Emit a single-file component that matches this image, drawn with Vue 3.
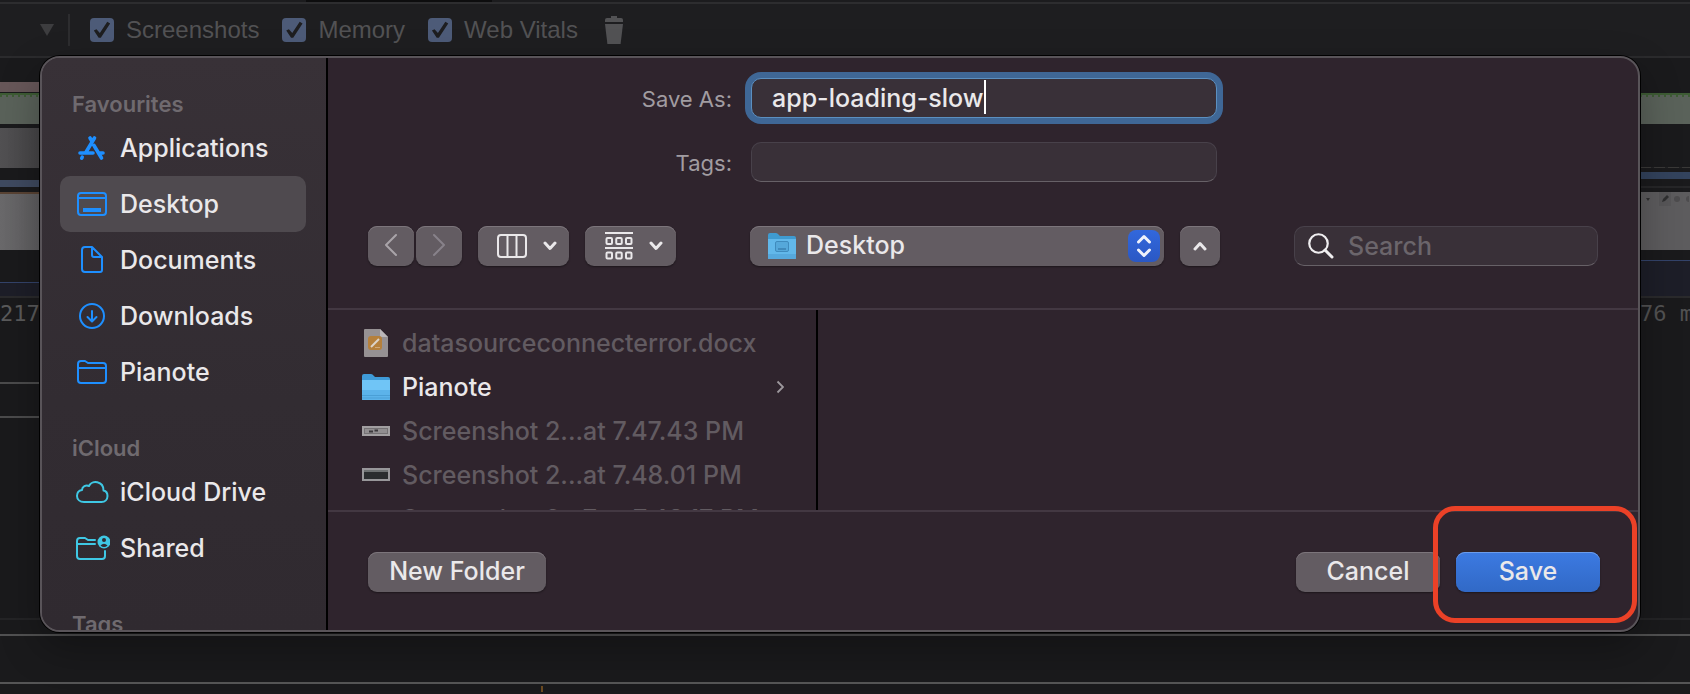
<script setup>
import { ref } from 'vue'

const captureOptions = ref([
  { id: 'opt-screenshots', label: 'Screenshots', on: true },
  { id: 'opt-memory', label: 'Memory', on: true },
  { id: 'opt-vitals', label: 'Web Vitals', on: true },
])

const fileName = ref('app-loading-slow')
const tags = ref('')
const query = ref('')
const folder = ref('Desktop')

const favourites = [
  { name: 'Applications', icon: 'apps' },
  { name: 'Desktop', icon: 'desktop', active: true },
  { name: 'Documents', icon: 'doc' },
  { name: 'Downloads', icon: 'down' },
  { name: 'Pianote', icon: 'folder' },
]
const cloud = [
  { name: 'iCloud Drive', icon: 'cloud' },
  { name: 'Shared', icon: 'shared' },
]
const sections = [
  { title: 'Favourites', items: favourites, tone: 'tone-blue' },
  { title: 'iCloud', items: cloud, tone: 'tone-cyan' },
  { title: 'Tags', items: [], tone: 'tone-blue' },
]

const files = [
  { name: 'datasourceconnecterror.docx', icon: 'docx' },
  { name: 'Pianote', icon: 'folder', open: true },
  { name: 'Screenshot 2...at 7.47.43 PM', icon: 'shotLight' },
  { name: 'Screenshot 2...at 7.48.01 PM', icon: 'shotDark' },
  { name: 'Screenshot 2...7 at 7.48.17 PM', icon: 'none' },
]
</script>

<template>
  <div class="screen">
    <div class="backdrop">
      <div class="tabstrip"><span class="tab-mark"></span></div>
      <header class="devbar">
        <svg class="tri" width="14" height="12" viewBox="0 0 14 12"><path d="M0 0H14L7 12Z" fill="#3d3d3f" /></svg>
        <span class="bar-sep"></span>
        <label v-for="o in captureOptions" :key="o.id" class="opt" :for="o.id">
          <input :id="o.id" v-model="o.on" type="checkbox" />
          <span>{{ o.label }}</span>
        </label>
        <svg class="trash" width="18" height="28" viewBox="0 0 18 28" fill="#525254">
          <path d="M6 0H12V2H16Q18 2 18 4V6H0V4Q0 2 2 2H6Z" />
          <path d="M0 8H18L15.600 28H2.400Z" />
        </svg>
      </header>
      <div class="tracks">
        <div class="gutter left">
          <i class="pink"></i>
          <i class="green"></i>
          <i class="grey"></i>
          <i class="blue"></i>
          <i class="shot"></i>
          <i class="navy"></i>
          <span class="ms">217</span>
          <i class="rule first"></i>
          <i class="rule"></i>
        </div>
        <div class="gutter right">
          <i class="green"></i>
          <i class="dash"></i>
          <i class="blue"></i>
          <i class="hair"></i>
          <i class="shot">
            <svg width="49" height="14" viewBox="0 0 49 14">
              <rect x="19" width="12" height="14" fill="#575658" />
              <path d="M6 6H10L8 9Z" fill="#2f2f30" />
              <path d="M22 10L23 7L27 3L29 5L25 9Z" fill="#2f2f30" />
              <circle cx="37" cy="7" r="3" fill="#4d4c4e" />
              <circle cx="49" cy="7" r="3" fill="#4d4c4e" />
            </svg>
          </i>
          <i class="navy"></i>
          <span class="ms">76 ms</span>
        </div>
      </div>
      <div class="panel-a"></div>
      <div class="panel-b"></div>
      <div class="panel-c"><span class="tick"></span></div>
    </div>

    <section class="dialog" role="dialog" aria-label="Save">
      <nav class="sidebar">
        <div v-for="s in sections" :key="s.title" class="section" :class="s.tone">
          <h2>{{ s.title }}</h2>
          <a v-for="i in s.items" :key="i.name" href="#" class="place" :class="{ active: i.active }">
            <svg width="36" height="32" viewBox="0 0 36 32" fill="none" stroke="currentColor" stroke-width="2" stroke-linecap="round" stroke-linejoin="round">
              <g v-if="i.icon === 'apps'" stroke-width="3.600">
                <path d="M16 6L17.500 8.500M20.500 6L11.800 20.500M6 21H19M8.200 25.200L7.700 26.200M20 13.500L27.500 26M25.500 21H29" />
              </g>
              <g v-else-if="i.icon === 'desktop'">
                <rect x="4" y="5" width="28" height="22" rx="3" />
                <path d="M4 10H32" />
                <path d="M9 22H27" stroke-width="4" stroke-linecap="butt" />
              </g>
              <g v-else-if="i.icon === 'doc'">
                <path d="M11 3H18L28 13V26Q28 28 26 28H11Q8 28 8 25V6Q8 3 11 3ZM18 3V11Q18 13 20 13H28" />
              </g>
              <g v-else-if="i.icon === 'down'">
                <circle cx="18" cy="16" r="12" />
                <path d="M18 11V21M13.500 17L18 21.500L22.500 17" />
              </g>
              <g v-else-if="i.icon === 'folder'">
                <path d="M4 8Q4 5 7 5H11L14 7H29Q32 7 32 10V24Q32 27 29 27H7Q4 27 4 24ZM4 12H32" />
              </g>
              <g v-else-if="i.icon === 'cloud'">
                <path d="M10 26C6 26 3 23.500 3 20C3 17 5 14.500 8 14C8 10.500 12 8.500 15 10C18 3.500 29.500 5 29.500 14.500C32 15 33.500 17.500 33.500 20C33.500 23.500 31 26 27.500 26Z" />
              </g>
              <g v-else>
                <path d="M21 8H14L11 6H6Q3 6 3 9V24Q3 27 6 27H28Q31 27 31 24V19M3 12H21" />
                <circle cx="30" cy="10" r="6.500" fill="currentColor" stroke="none" />
                <circle cx="30" cy="8" r="2" fill="#302b31" stroke="none" />
                <path d="M26.500 13.500Q30 10 33.500 13.500Q30 16.500 26.500 13.500Z" fill="#302b31" stroke="none" />
              </g>
            </svg>
            <span>{{ i.name }}</span>
          </a>
        </div>
      </nav>

      <div class="main">
        <form class="fields" @submit.prevent>
          <label for="save-as">Save As:</label>
          <div class="field">
            <input id="save-as" v-model="fileName" class="focused" type="text" />
            <span class="caret"></span>
          </div>
          <label for="tags">Tags:</label>
          <div class="field"><input id="tags" v-model="tags" type="text" /></div>
        </form>

        <div class="toolbar">
          <div class="group">
            <div class="pair">
              <button type="button" class="btn nav" aria-label="Back">
                <svg width="14" height="24" viewBox="0 0 14 24"><path d="M12 2L2 12L12 22" fill="none" stroke="#a9a4a9" stroke-width="2" stroke-linecap="round" stroke-linejoin="round" /></svg>
              </button>
              <button type="button" class="btn nav" aria-label="Forward">
                <svg width="14" height="24" viewBox="0 0 14 24"><path d="M2 2L12 12L2 22" fill="none" stroke="#88828a" stroke-width="2" stroke-linecap="round" stroke-linejoin="round" /></svg>
              </button>
            </div>
            <button type="button" class="btn view" aria-label="Column view">
              <svg width="30" height="28" viewBox="0 0 30 28" fill="none" stroke="#eae8ea" stroke-width="2"><rect x="1" y="3" width="28" height="22" rx="3" /><path d="M10.500 3V25M19.500 3V25" /></svg>
              <svg width="14" height="10" viewBox="0 0 14 10"><path d="M2 2L7 7.500L12 2" fill="none" stroke="#eae8ea" stroke-width="3" stroke-linecap="round" stroke-linejoin="round" /></svg>
            </button>
            <button type="button" class="btn view" aria-label="Group items">
              <svg width="28" height="28" viewBox="0 0 28 28" fill="none" stroke="#eae8ea" stroke-width="2">
                <path d="M0 1H28M0 16H28" />
                <rect x="1.500" y="6" width="5.500" height="6" rx="1" /><rect x="11.250" y="6" width="5.500" height="6" rx="1" /><rect x="21" y="6" width="5.500" height="6" rx="1" />
                <rect x="1.500" y="20.500" width="5.500" height="6" rx="1" /><rect x="11.250" y="20.500" width="5.500" height="6" rx="1" /><rect x="21" y="20.500" width="5.500" height="6" rx="1" />
              </svg>
              <svg width="14" height="10" viewBox="0 0 14 10"><path d="M2 2L7 7.500L12 2" fill="none" stroke="#eae8ea" stroke-width="3" stroke-linecap="round" stroke-linejoin="round" /></svg>
            </button>
          </div>

          <div class="group">
            <div class="popup">
              <svg class="popup-icon" width="28" height="28" viewBox="0 0 28 28">
                <path d="M0 3Q0 1 2 1H8Q9.500 1 10.500 2.500L12 4H26Q28 4 28 6V10H0Z" fill="#3f9bd0" />
                <path d="M0 7H28V26Q28 27 27 27H1Q0 27 0 26Z" fill="#62b8ea" />
                <path d="M0 22H28V26Q28 27 27 27H1Q0 27 0 26Z" fill="#56a9dd" />
                <rect x="7.500" y="9.500" width="13" height="10" rx="1.500" fill="#55a8da" stroke="#3f8bbd" />
                <path d="M10 17H18" stroke="#3a80b0" stroke-width="1.500" />
              </svg>
              <select id="where" v-model="folder" aria-label="Where"><option>Desktop</option></select>
              <span class="stepper">
                <svg width="16" height="24" viewBox="0 0 16 24" fill="none" stroke="#eef2fb" stroke-width="3" stroke-linecap="round" stroke-linejoin="round"><path d="M2.500 8L8 2.500L13.500 8M2.500 16L8 21.500L13.500 16" /></svg>
              </span>
            </div>
            <button type="button" class="btn up" aria-label="Collapse">
              <svg width="14" height="10" viewBox="0 0 14 10"><path d="M2 8L7 2.500L12 8" fill="none" stroke="#eae8ea" stroke-width="3" stroke-linecap="round" stroke-linejoin="round" /></svg>
            </button>
          </div>

          <div class="search">
            <svg width="26" height="26" viewBox="0 0 26 26" fill="none" stroke="#f0eef0"><circle cx="10.500" cy="10.500" r="9.250" stroke-width="2.200" /><path d="M17 17L24 24" stroke-width="3" stroke-linecap="round" /></svg>
            <input v-model="query" type="search" aria-label="Search" placeholder="Search" />
          </div>
        </div>

        <div class="browser">
          <ul class="column">
            <li v-for="f in files" :key="f.name" :class="{ open: f.open }">
              <svg class="file-icon" width="28" height="28" viewBox="0 0 28 28">
                <g v-if="f.icon === 'docx'">
                  <path d="M2 1Q2 0 3 0H18L26 8V27Q26 28 25 28H3Q2 28 2 27Z" fill="#969193" />
                  <path d="M18 0L26 8H19Q18 8 18 7Z" fill="#bcb8ba" />
                  <rect x="6" y="7" width="14" height="14" rx="3" fill="#b5803c" />
                  <path d="M9 18L17 10" stroke="#dcd4ca" stroke-width="2" />
                  <path d="M13 18.500H18" stroke="#cfa877" />
                </g>
                <g v-else-if="f.icon === 'folder'">
                  <path d="M0 3Q0 1 2 1H9Q10.500 1 12 3L13 4H26Q28 4 28 6V10H0Z" fill="#3f9bd8" />
                  <path d="M0 7H28V26Q28 27 27 27H1Q0 27 0 26Z" fill="#70c5f6" />
                  <path d="M0 17H28V26Q28 27 27 27H1Q0 27 0 26Z" fill="#5cb3ea" />
                  <path d="M0 22.500H28M0 25H28" stroke="#4a9fd6" />
                </g>
                <g v-else-if="f.icon === 'shotLight'">
                  <rect y="9" width="28" height="10" fill="#a29fa1" />
                  <rect x="2.500" y="11.500" width="23" height="5" fill="#918e90" stroke="#757274" />
                  <path d="M7 14.500H11M12.500 13.500H16" stroke="#3c393c" stroke-width="2" />
                </g>
                <g v-else-if="f.icon === 'shotDark'">
                  <rect y="7" width="28" height="13" fill="#98979a" />
                  <rect x="2" y="11" width="24" height="7" fill="#2b2d2f" />
                  <rect x="2" y="9" width="24" height="2" fill="#6e7172" />
                </g>
              </svg>
              <span>{{ f.name }}</span>
              <svg v-if="f.open" class="more" width="8" height="14" viewBox="0 0 8 14"><path d="M1.500 1.500L7 7L1.500 12.500" fill="none" stroke="#9d989d" stroke-width="1.800" /></svg>
            </li>
          </ul>
        </div>

        <footer class="actions">
          <button type="button" class="btn wide">New Folder</button>
          <span class="spacer"></span>
          <button type="button" class="btn act">Cancel</button>
          <div class="save-wrap">
            <button type="button" class="btn act primary">Save</button>
            <span class="highlight"></span>
          </div>
        </footer>
      </div>
    </section>
  </div>
</template>

<style>
html,
body {
  background: #19191b;
}
body {
  overflow: hidden;
}
</style>

<style scoped>
* {
  box-sizing: border-box;
}
.screen {
  position: relative;
  font-family: Inter, "Liberation Sans", sans-serif;
  font-size: 25px;
  font-weight: 500;
  color: #eae8ea;
}
.backdrop {
  overflow: hidden;
  background: #1a1a1c;
}
.tabstrip {
  height: 4px;
  background: #1c1c1e;
  border-bottom: 2px solid #2d2d2f;
  padding-left: 306px;
}
.tab-mark {
  display: block;
  width: 186px;
  height: 2px;
  background: #0d0d0e;
}
.devbar {
  display: flex;
  align-items: center;
  height: 54px;
  padding: 0 40px;
  background: #1e1e20;
  border-bottom: 2px solid #2b2b2d;
  font-family: "Liberation Sans", Arial, sans-serif;
  font-size: 24px;
  font-weight: 400;
  color: #525254;
}
.bar-sep {
  width: 2px;
  height: 32px;
  margin: 0 20px 0 14px;
  background: #2d2d2f;
}
.opt {
  display: flex;
  align-items: center;
  gap: 12px;
  margin-right: 23px;
}
.opt input {
  appearance: none;
  width: 24px;
  height: 24px;
  margin: 0;
  border-radius: 4px;
  background: #4d5b78;
}
.opt input:checked::before {
  content: "";
  display: block;
  width: 24px;
  height: 24px;
  background: #1e1e20;
  clip-path: polygon(16% 52%, 27% 47%, 41% 63%, 72% 16%, 84% 23%, 45% 82%, 36% 82%);
}
.trash {
  margin-left: 4px;
}
.tracks {
  display: flex;
  justify-content: space-between;
  height: 560px;
}
.gutter {
  width: 40px;
  padding-top: 24px;
}
.gutter.right {
  width: 50px;
  padding-top: 35px;
}
.gutter i {
  display: block;
}
.pink {
  height: 10px;
  margin-bottom: 1px;
  background: #675759;
}
.green {
  height: 31px;
  background: repeating-linear-gradient(90deg, #3e5c35 0 2px, transparent 2px 6px) 0 2px / 100% 2px no-repeat, linear-gradient(#3e5c35 0 2px, #5a625a 2px);
}
.grey {
  height: 40px;
  margin-top: 4px;
  background: linear-gradient(90deg, #525153, #464547);
}
.blue {
  height: 7px;
  margin-top: 12px;
  background: #3f4a60;
}
.shot {
  height: 58px;
  margin-top: 5px;
  background: linear-gradient(90deg, #6a696b, #5f5e60);
}
.left .shot {
  border-top: 2px solid #594334;
}
.navy {
  height: 16px;
  margin-top: 32px;
  background: #1d1e28;
  border-top: 1px solid #33436a;
  border-bottom: 2px solid #2a2a2c;
}
.ms {
  display: block;
  overflow: hidden;
  margin-top: 2px;
  font-family: "DejaVu Sans Mono", monospace;
  font-size: 22px;
  font-weight: 400;
  line-height: 28px;
  white-space: nowrap;
  color: #5a5a5b;
}
.rule {
  height: 2px;
  margin-top: 32px;
  background: #4b4b4c;
}
.rule.first {
  margin-top: 54px;
}
.dash {
  height: 1px;
  margin-top: 43px;
  background: repeating-linear-gradient(90deg, #3a3938 0 11px, #222224 11px 14px);
}
.right .blue {
  height: 7px;
  margin-top: 4px;
  background: #33435d;
}
.hair {
  height: 2px;
  margin-top: 7px;
  background: #262628;
}
.right .shot {
  margin-top: 4px;
  background: #5d5c5e;
}
.right .shot svg {
  display: block;
}
.right .navy {
  height: 38px;
  margin-top: 10px;
}
.right .ms {
  color: #525253;
}
.panel-a {
  height: 18px;
  border-top: 2px solid #242426;
  border-bottom: 2px solid #515152;
}
.panel-b {
  height: 48px;
  border-bottom: 2px solid #555556;
}
.panel-c {
  height: 10px;
  padding: 2px 0 0 541px;
}
.tick {
  display: block;
  width: 2px;
  height: 6px;
  background: #6b4a20;
}

.dialog {
  position: absolute;
  top: 56px;
  left: 40px;
  right: 50px;
  display: flex;
  overflow: hidden;
  border: 2px solid #595459;
  border-radius: 20px;
  background: #2f242d;
  box-shadow: 0 0 0 1px #000, 0 16px 40px rgba(0, 0, 0, 0.3);
}
.sidebar {
  contain: size;
  flex: none;
  width: 286px;
  padding: 0 20px 0 18px;
  overflow: hidden;
  border-right: 2px solid #000;
  background: linear-gradient(#383137, #322c32 60%, #302a30);
}
.section {
  padding-top: 34px;
}
.section:first-child {
  padding-top: 32px;
}
.section h2 {
  margin: 0 0 2px;
  padding-left: 12px;
  font-size: 22px;
  line-height: 28px;
  font-weight: 600;
  color: #6f6a6f;
}
.place {
  display: flex;
  align-items: center;
  gap: 10px;
  height: 56px;
  padding-left: 14px;
  border-radius: 10px;
  color: #eae8ea;
  text-decoration: none;
}
.place svg {
  color: #1e8fff;
}
.tone-cyan .place svg {
  color: #3fc8e4;
}
.place.active {
  background: #4f4a4f;
}
.main {
  flex: 1;
  min-width: 0;
}
.fields {
  display: grid;
  grid-template-columns: 1fr 466px 1fr;
  column-gap: 19px;
  row-gap: 24px;
  align-items: center;
  padding: 20px 0 44px 2px;
}
.fields label {
  grid-column: 1;
  padding-top: 2px;
  font-size: 22px;
  line-height: 28px;
  font-weight: 400;
  text-align: right;
  color: #a19ca1;
}
.field {
  position: relative;
}
.field input {
  display: block;
  width: 100%;
  height: 40px;
  padding: 0 20px;
  border: 1px solid #48414a;
  border-bottom-color: #676167;
  border-radius: 10px;
  outline: 0;
  background: #393038;
  font: inherit;
  color: #eae8ea;
}
.field input.focused {
  border-color: #5b8fc0;
  box-shadow: 0 0 0 6px #3f6796;
}
.caret {
  position: absolute;
  top: 2px;
  left: 233px;
  width: 2px;
  height: 34px;
  background: #fff;
}
.toolbar {
  display: flex;
  justify-content: space-between;
  padding: 0 40px 42px;
  border-bottom: 2px solid #433842;
}
.group {
  display: flex;
  gap: 16px;
}
.pair {
  display: flex;
  gap: 2px;
}
.btn {
  display: flex;
  align-items: center;
  justify-content: center;
  height: 40px;
  padding: 0;
  border: 0;
  border-radius: 9px;
  background: #635c62;
  box-shadow: inset 0 1px #7c757b, 0 1px 2px rgba(0, 0, 0, 0.4);
  font: inherit;
  color: #eae8ea;
}
.nav {
  width: 46px;
  padding-bottom: 2px;
}
.view {
  width: 91px;
  gap: 16px;
  padding-left: 6px;
}
.popup {
  position: relative;
  width: 414px;
}
.popup select {
  appearance: none;
  display: block;
  width: 100%;
  height: 40px;
  padding: 0 60px 2px 56px;
  border: 0;
  border-radius: 9px;
  background: #635c62;
  box-shadow: inset 0 1px #7c757b, 0 1px 2px rgba(0, 0, 0, 0.4);
  font: inherit;
  color: #eae8ea;
}
.popup-icon {
  position: absolute;
  top: 6px;
  left: 18px;
}
.stepper {
  position: absolute;
  top: 4px;
  right: 4px;
  display: flex;
  align-items: center;
  justify-content: center;
  width: 32px;
  height: 32px;
  border-radius: 8px;
  background: linear-gradient(#3268dc, #2a58c4);
  pointer-events: none;
}
.up {
  width: 40px;
}
.search {
  display: flex;
  align-items: center;
  gap: 14px;
  width: 304px;
  height: 40px;
  padding: 0 13px;
  border: 1px solid #48414a;
  border-bottom-color: #676167;
  border-radius: 10px;
  background: #393038;
}
.search svg {
  flex: none;
}
.search input {
  appearance: none;
  min-width: 0;
  flex: 1;
  height: 36px;
  padding: 0;
  border: 0;
  outline: 0;
  background: none;
  font: inherit;
  color: #eae8ea;
}
.search input::placeholder {
  color: #6b656b;
  opacity: 1;
}
.browser {
  height: 202px;
  overflow: hidden;
  border-bottom: 2px solid #433842;
}
.column {
  width: 490px;
  height: 200px;
  margin: 0;
  padding: 11px 32px 0 34px;
  overflow: hidden;
  border-right: 2px solid #000;
  list-style: none;
}
.column li {
  display: flex;
  align-items: center;
  gap: 12px;
  height: 44px;
  color: #625b61;
  white-space: nowrap;
}
.column li.open {
  color: #eae8ea;
}
.file-icon {
  flex: none;
}
.more {
  margin-left: auto;
}
.actions {
  display: flex;
  align-items: center;
  gap: 16px;
  padding: 40px 38px 38px 40px;
}
.spacer {
  flex: 1;
}
.wide {
  width: 178px;
  padding-bottom: 2px;
}
.act {
  width: 144px;
  padding-bottom: 2px;
}
.primary {
  background: linear-gradient(#3c7ae2, #3169c6);
  box-shadow: inset 0 1px #6b9ceb, 0 1px 2px rgba(0, 0, 0, 0.4);
}
.save-wrap {
  position: relative;
}
.highlight {
  position: absolute;
  inset: -46px -37px -31px -23px;
  border: 5px solid #eb4127;
  border-radius: 22px;
  pointer-events: none;
}
</style>
